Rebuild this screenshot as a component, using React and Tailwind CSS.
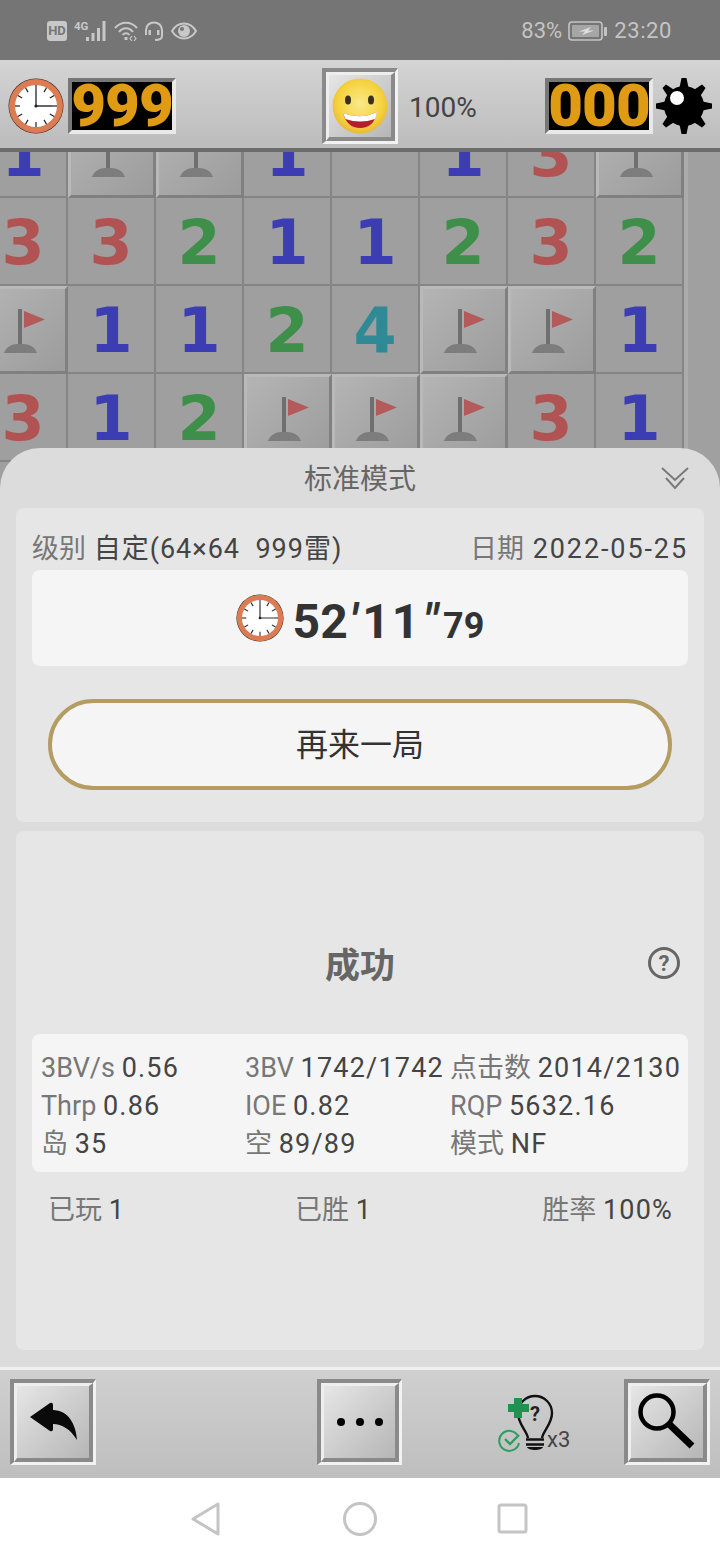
import React from "react";

// --- board data, f = flag, "" = opened empty ---
const rows = [
  ["1", "f", "f", "1", "", "1", "3", "f"],
  ["3", "3", "2", "1", "1", "2", "3", "2"],
  ["f", "1", "1", "2", "4", "f", "f", "1"],
  ["3", "1", "2", "f", "f", "f", "3", "1"],
  ["", "", "", "", "", "", "", ""],
];

const numColor = {
  1: "text-[#3d3db3]",
  2: "text-[#3d8f4a]",
  3: "text-[#b25353]",
  4: "text-[#2f8a96]",
};

const Flag = () => (
  <svg width="88" height="88" viewBox="0 0 88 88" className="absolute -top-[3px] -left-[3px]">
    <rect x="38" y="23" width="4" height="36" fill="#6f6f6f" />
    <path d="M44 25 L65 33.5 L44 42 Z" fill="#b55a5a" />
    <path d="M24 67 C26 61 32 58 37 58 H43 C49 58 55 61 57 67 Z" fill="#7d7d7d" />
  </svg>
);

const Cell = ({ v }) => {
  if (v === "f") {
    return (
      <div className="relative h-[88px] border-[3px] border-t-[#b9b9b9] border-l-[#b9b9b9] border-r-[#808080] border-b-[#808080] bg-gradient-to-br from-[#b4b4b4] to-[#9c9c9c]">
        <Flag />
      </div>
    );
  }
  return (
    <div
      className={`flex h-[88px] items-center justify-center border-r-2 border-b-2 border-[#858585] bg-[#9f9f9f] pt-1 font-['DejaVu_Sans',sans-serif] text-[62px] leading-none font-bold ${numColor[v] || ""}`}
    >
      {v}
    </div>
  );
};

const Clock = ({ size }) => {
  const ticks = Array.from({ length: 12 }).map((_, i) => i * 30);
  return (
    <svg width={size} height={size} viewBox="0 0 56 56" className="shrink-0">
      <circle cx="28" cy="28" r="27.5" fill="#3a2a22" />
      <circle cx="28" cy="28" r="27" fill="#dc7c54" />
      <circle cx="28" cy="28" r="21" fill="#ffffff" />
      {ticks.map((a) => (
        <rect key={a} x="27.4" y="7" width="1.2" height="5" fill="#222" transform={`rotate(${a} 28 28)`} />
      ))}
      <path d="M28 12 V28 H44" stroke="#333" strokeWidth="1.4" fill="none" />
      <circle cx="28" cy="28" r="1.6" fill="#222" />
    </svg>
  );
};

const Lcd = ({ value }) => (
  <div className="h-[56px] w-[108px] shrink-0 border-4 border-t-[#777777] border-l-[#777777] border-r-[#e9e9e9] border-b-[#e9e9e9] bg-black">
    <div className="flex h-full items-center justify-center text-[60px] leading-none font-black tracking-[-1px] text-[#e09b14]">
      {value}
    </div>
  </div>
);

// --- double bevel used by all square buttons ---
const Bevel = ({ className, children }) => (
  <div
    className={`shrink-0 border-t-4 border-l-4 border-r-[3px] border-b-[3px] border-t-[#8a8a8a] border-l-[#8a8a8a] border-r-[#f2f2f2] border-b-[#f2f2f2] ${className}`}
  >
    <div className="flex h-full w-full items-center justify-center border-t-[3px] border-l-[3px] border-r-4 border-b-4 border-t-[#eeeeee] border-l-[#eeeeee] border-r-[#8a8a8a] border-b-[#8a8a8a] bg-gradient-to-br from-[#e6e6e6] to-[#b6b6b6]">
      {children}
    </div>
  </div>
);

const Smiley = () => (
  <svg width="56" height="56" viewBox="0 0 56 56">
    <defs>
      <radialGradient id="sm" cx="50%" cy="45%" r="55%">
        <stop offset="0%" stopColor="#fbe98a" />
        <stop offset="75%" stopColor="#f5d23c" />
        <stop offset="100%" stopColor="#e8b93a" />
      </radialGradient>
    </defs>
    <circle cx="28" cy="28" r="27.5" fill="url(#sm)" />
    <ellipse cx="16" cy="22" rx="3" ry="4.5" fill="#3a3020" />
    <ellipse cx="39" cy="22" rx="3" ry="4.5" fill="#3a3020" />
    <path d="M11 35 Q28 42 45 34 Q42 50 28 50 Q15 50 11 35 Z" fill="#b5202c" />
    <path d="M11 35 Q28 42 45 34 Q44.5 38 43 41 Q28 46 13.5 41 Q12 38 11 35 Z" fill="#ffffff" />
  </svg>
);

const Gear = () => {
  const teeth = [0, 45, 90, 135, 180, 225, 270, 315];
  return (
    <svg width="56" height="56" viewBox="0 0 56 56" className="shrink-0">
      {teeth.map((a) => (
        <path key={a} d="M23 12 L25.5 0 H30.5 L33 12 Z" fill="#000" transform={`rotate(${a} 28 28)`} />
      ))}
      <circle cx="28" cy="28" r="20" fill="#000" />
      <circle cx="21" cy="20" r="7" fill="#fff" />
    </svg>
  );
};

const Stat = ({ k, v }) => (
  <div className="whitespace-nowrap">
    <span className="text-[#777777]">{k}</span> <span className="tracking-[1.2px] text-[#444444]">{v}</span>
  </div>
);

export default function App() {
  return (
    <div className="flex h-[1560px] w-[720px] flex-col overflow-hidden bg-white font-['Roboto','Noto_Sans_CJK_SC',sans-serif]">
      {/* === STATUS BAR === */}
      <div className="flex h-[60px] shrink-0 items-center justify-between bg-[#757575] pt-px pr-[48px] pl-[47px] text-[#c4c4c4]">
        <div className="flex items-center">
          <div className="flex h-[20px] w-[20px] items-center justify-center rounded-[3px] bg-[#c8c8c8] text-[13px] leading-none font-bold text-[#757575]">
            HD
          </div>
          <svg width="34" height="20" viewBox="0 0 34 20" className="ml-[7px] overflow-visible">
            <text x="0" y="9" fontSize="11.5" fontWeight="700" fill="#c8c8c8">4G</text>
            <g fill="#c8c8c8">
              <rect x="12" y="16" width="3" height="4" />
              <rect x="17.5" y="12" width="3" height="8" />
              <rect x="23" y="7" width="3" height="13" />
              <rect x="28.5" y="0" width="3" height="20" />
            </g>
          </svg>
          <svg width="24" height="20" viewBox="0 0 24 20" className="ml-[6px]" fill="none" stroke="#c8c8c8" strokeWidth="2">
            <path d="M1 7 C7 0 17 0 23 7" />
            <path d="M5 11 C9 6 15 6 19 11" />
            <path d="M8.5 14 C10.5 11.5 13.5 11.5 15.5 14" />
            <rect x="10.5" y="16" width="3" height="3" fill="#c8c8c8" stroke="none" />
            <path d="M18 15 L16 17.5 L18 20 M20 15 L22 17.5 L20 20" strokeWidth="1.2" />
          </svg>
          <svg width="20" height="20" viewBox="0 0 20 20" className="ml-[6px]" fill="none" stroke="#c8c8c8" strokeWidth="2">
            <path d="M2 14 V9 C2 -1 18 -1 18 9 V15 C18 18 15 19 11 19" />
            <rect x="4.5" y="9" width="2.5" height="5" fill="#c8c8c8" stroke="none" />
            <rect x="13" y="9" width="2.5" height="5" fill="#c8c8c8" stroke="none" />
          </svg>
          <svg width="26" height="18" viewBox="0 0 26 18" className="ml-[7px]">
            <path d="M1 9 C7 -1 19 -1 25 9 C19 19 7 19 1 9 Z" fill="none" stroke="#c8c8c8" strokeWidth="2" />
            <circle cx="13" cy="9" r="6" fill="#c8c8c8" />
            <circle cx="11" cy="7" r="2" fill="#757575" />
          </svg>
        </div>
        <div className="flex items-center text-[22px] leading-none">
          <span>83%</span>
          <svg width="40" height="20" viewBox="0 0 40 20" className="mx-[6px]">
            <rect x="1" y="1" width="33" height="18" rx="3" fill="none" stroke="#c4c4c4" strokeWidth="1.6" />
            <rect x="4" y="4" width="27" height="12" rx="1" fill="#a6a6a6" />
            <path d="M23 6 L11 10.5 H17 L14 14 L26 9.5 H20 Z" fill="#dedede" />
            <rect x="36" y="6" width="3" height="9" rx="1" fill="#c4c4c4" />
          </svg>
          <span className="tracking-[0.6px]">23:20</span>
        </div>
      </div>

      {/* === TOP BAR === */}
      <div className="z-10 flex h-[92px] shrink-0 items-center border-b-4 border-[#6b6b6b] bg-gradient-to-b from-[#d4d4d4] to-[#bcbcbc] px-2 pt-1">
        <Clock size={56} />
        <div className="ml-1">
          <Lcd value="999" />
        </div>
        <Bevel className="ml-[146px] h-[76px] w-[76px]">
          <Smiley />
        </Bevel>
        <span className="ml-[11px] pt-1 text-[28px] leading-none text-[#444444]">100%</span>
        <div className="ml-auto">
          <Lcd value="000" />
        </div>
        <div className="ml-[3px]">
          <Gear />
        </div>
      </div>

      {/* === BOARD + RESULT SHEET === */}
      <div className="relative min-h-0 flex-1 overflow-hidden bg-[#a0a0a0]">
        <div className="-mt-[42px] -ml-[20px] grid w-[708px] grid-cols-[repeat(8,88px)] border-r-4 border-[#ababab]">
          {rows.flat().map((v, i) => (
            <Cell key={i} v={v} />
          ))}
        </div>

        <div className="absolute inset-x-0 top-[296px] bottom-0 flex flex-col rounded-t-[40px] bg-[#dcdcdc] px-4 pb-[17px]">
          <div className="relative flex h-[60px] shrink-0 items-center justify-center pt-[3px] text-[28px] leading-none text-[#666666]">
            标准模式
            <svg width="28" height="24" viewBox="0 0 28 24" className="absolute top-[18px] right-[15px]" fill="none" stroke="#7a7a7a" strokeWidth="2">
              <path d="M1 2 L14 14 L27 2" />
              <path d="M5 12 L14 22 L23 12" />
            </svg>
          </div>

          <div className="h-[314px] shrink-0 rounded-lg bg-[#e6e6e6] px-4">
            <div className="flex h-[62px] items-center justify-between pt-[20px] text-[27px] leading-none">
              <div className="whitespace-pre">
                <span className="text-[#777777]">级别</span>
                <span className="tracking-[1px] text-[#444444]">{" 自定(64×64  999雷)"}</span>
              </div>
              <div>
                <span className="text-[#777777]">日期</span>
                <span className="tracking-[1.9px] text-[#444444]"> 2022-05-25</span>
              </div>
            </div>
            <div className="flex h-[96px] items-center justify-center gap-[9px] rounded-lg bg-[#f5f5f5]">
              <Clock size={48} />
              <div className="flex items-baseline pt-[7px] font-bold text-[#333333]">
                <span className="text-[48px] leading-none">52</span>
                <span className="mr-[5px] ml-[2px] text-[48px] leading-none italic">′</span>
                <span className="text-[48px] leading-none tracking-[2px]">11</span>
                <span className="mr-[5px] ml-[2px] text-[48px] leading-none italic">″</span>
                <span className="text-[36px] leading-none">79</span>
              </div>
            </div>
            <div className="mx-4 mt-[33px] flex h-[91px] items-center justify-center rounded-full border-4 border-[#b49c62] bg-[#f5f5f5] text-[32px] leading-none text-[#333333]">
              再来一局
            </div>
          </div>

          <div className="mt-[9px] flex-1 rounded-lg bg-[#e6e6e6] px-4">
            <div className="mt-[115px] grid h-[40px] grid-cols-3 items-center">
              <div />
              <div className="text-center text-[35px] leading-none font-bold text-[#666666]">成功</div>
              <div className="justify-self-end pr-2">
                <svg width="32" height="32" viewBox="0 0 32 32" className="-mt-[6px]">
                  <circle cx="16" cy="16" r="14.5" fill="none" stroke="#666666" strokeWidth="3" />
                  <text x="16" y="24" textAnchor="middle" fontSize="22" fontWeight="700" fill="#666666">?</text>
                </svg>
              </div>
            </div>
            <div className="mt-[48px] grid h-[138px] grid-cols-[204px_205px_1fr] content-start rounded-lg bg-[#f5f5f5] pt-[15px] pl-[9px] text-[27px] leading-[38px]">
              <Stat k="3BV/s" v="0.56" />
              <Stat k="3BV" v="1742/1742" />
              <Stat k="点击数" v="2014/2130" />
              <Stat k="Thrp" v="0.86" />
              <Stat k="IOE" v="0.82" />
              <Stat k="RQP" v="5632.16" />
              <Stat k="岛" v="35" />
              <Stat k="空" v="89/89" />
              <Stat k="模式" v="NF" />
            </div>
            <div className="mt-[19px] flex justify-between pr-[15px] pl-4 text-[27px] leading-[38px]">
              <Stat k="已玩" v="1" />
              <Stat k="已胜" v="1" />
              <Stat k="胜率" v="100%" />
            </div>
          </div>
        </div>
      </div>

      {/* === BOTTOM TOOLBAR === */}
      <div className="flex h-[111px] shrink-0 items-start border-t-[3px] border-[#f0f0f0] bg-gradient-to-b from-[#d0d0d0] to-[#bebebe] px-[10px] pt-[9px]">
        <Bevel className="h-[86px] w-[86px]">
          <svg width="72" height="72" viewBox="7 7 72 72">
            <path d="M20 38 L40 24 Q43 23 43 26 V31 C58 31 66 45 67 61 C60 50 52 45 43 45 V50 Q43 53 40 52 Z" fill="#0a0a0a" />
          </svg>
        </Bevel>
        <Bevel className="ml-[221px] h-[86px] w-[85px]">
          <div className="flex gap-[11px]">
            <div className="h-2 w-2 rounded-full bg-black" />
            <div className="h-2 w-2 rounded-full bg-black" />
            <div className="h-2 w-2 rounded-full bg-black" />
          </div>
        </Bevel>
        <div className="ml-[96px] flex h-[86px] w-[126px] items-end pb-[12px]">
          <svg width="56" height="62" viewBox="0 0 56 62" className="shrink-0">
            <path d="M30 47 C29 40 20 33 20 22 A17 17 0 1 1 54 22 C54 33 45 40 44 47" fill="none" stroke="#111" strokeWidth="2.4" />
            <path d="M28 48.5 H46 M28 53.5 H46" stroke="#111" strokeWidth="2.4" />
            <path d="M29 56 H45 C44 60 30 60 29 56 Z" fill="#111" />
            <text x="37" y="30" textAnchor="middle" fontSize="20" fontWeight="700" fill="#222">?</text>
            <path d="M16 7 H24 V13 H31 V21 H24 V27 H16 V21 H10 V13 H16 Z" fill="#1f9150" />
            <path d="M20 45 A10 10 0 1 0 21 52" fill="none" stroke="#2f9e5f" strokeWidth="2" />
            <path d="M7 48 L12 53 L21 44" fill="none" stroke="#2f9e5f" strokeWidth="2.4" />
          </svg>
          <span className="-ml-[7px] text-[22px] leading-[26px] text-[#444444]">x3</span>
        </div>
        <Bevel className="h-[86px] w-[86px]">
          <svg width="72" height="72" viewBox="7 7 72 72" fill="none" stroke="#000">
            <circle cx="33" cy="33" r="16.5" strokeWidth="4.5" />
            <path d="M45 45 L68 67" strokeWidth="7" />
          </svg>
        </Bevel>
      </div>

      {/* === NAV BAR === */}
      <div className="h-[82px] shrink-0 bg-white">
        <svg width="720" height="82" viewBox="0 0 720 82" fill="none" stroke="#c4c4c4" strokeWidth="3" strokeLinejoin="round">
          <path d="M193 41 L218 26 V56 Z" />
          <circle cx="360" cy="41" r="15.5" />
          <rect x="499" y="27" width="27" height="27" rx="2" />
        </svg>
      </div>
    </div>
  );
}
